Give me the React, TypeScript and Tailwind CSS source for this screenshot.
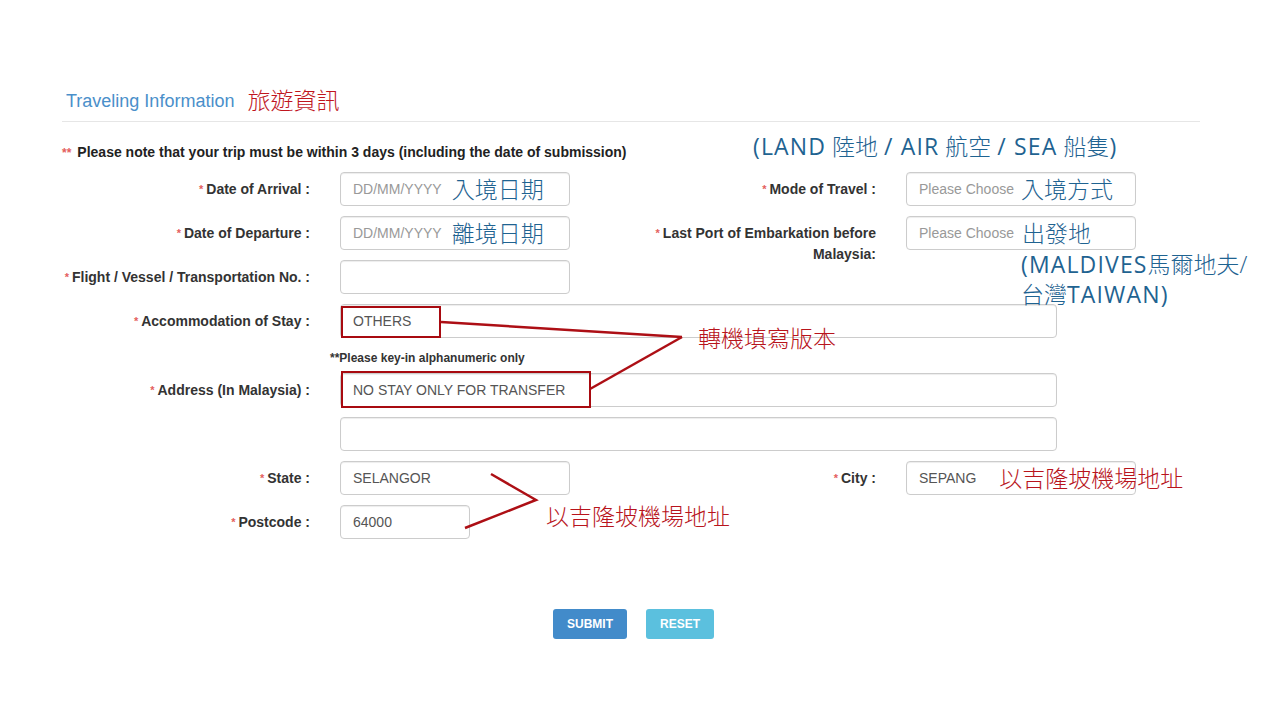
import React from "react";

const cjk = "font-['Open_Sans','Noto_Sans_CJK_TC','Noto_Sans_CJK_SC',sans-serif] font-light";

function Label({ children }: { children: React.ReactNode }) {
  return (
    <span className="text-[14px] font-bold text-[#333]">
      <span className="relative top-[-1px] mr-[3px] text-[11px] text-[#e4605e]">*</span>
      {children}
    </span>
  );
}

function Field({
  className = "w-[230px]",
  children,
}: {
  className?: string;
  children?: React.ReactNode;
}) {
  return (
    <div
      className={`flex h-[34px] items-center whitespace-nowrap rounded-[4px] border border-[#ccc] px-[12px] text-[14px] text-[#555] shadow-[inset_0_1px_1px_rgba(0,0,0,0.075)] ${className}`}
    >
      {children}
    </div>
  );
}

function BlueNote({ children, className = "" }: { children: React.ReactNode; className?: string }) {
  return <span className={`${cjk} text-[23px] leading-[28px] text-[#1f6391] ${className}`}>{children}</span>;
}

// latin bits of the annotations run a bit wider in the screenshot
function W({ children }: { children: React.ReactNode }) {
  return <span className="font-normal tracking-[0.05em]">{children}</span>;
}

export default function App() {
  return (
    <div className="relative min-h-[720px] w-[1280px] bg-white font-['Liberation_Sans',Arial,sans-serif]">
      <div className="pl-[62px] pr-[80px] pt-[86px]">
        {/* heading */}
        <div className="flex items-end">
          <h2 className="ml-[4px] text-[18px] leading-[26px] text-[#4a8fca]">Traveling Information</h2>
          <span className={`${cjk} ml-[13px] text-[23px] leading-[28px] text-[#c0161e]`}>旅遊資訊</span>
        </div>
        <div className="mt-[7px] border-t border-[#e6e6e6]" />

        <p className="mt-[22px] text-[14px] font-bold leading-[16px] text-[#222]">
          <span className="mr-[6px] text-[12px] text-[#e4605e]">**</span>
          Please note that your trip must be within 3 days (including the date of submission)
        </p>

        <div className="mt-[11px]">
          {/* arrival / mode */}
          <div className="mb-[10px] flex h-[34px] items-center">
            <div className="w-[248px] text-right">
              <Label>Date of Arrival :</Label>
            </div>
            <Field className="ml-[30px] w-[230px]">
              <span className="text-[#999]">DD/MM/YYYY</span>
              <BlueNote className="ml-[10px]">入境日期</BlueNote>
            </Field>
            <div className="ml-[30px] w-[276px] text-right">
              <Label>Mode of Travel :</Label>
            </div>
            <Field className="ml-[30px] w-[230px]">
              <span className="text-[#999]">Please Choose</span>
              <BlueNote className="ml-[7px]">入境方式</BlueNote>
            </Field>
          </div>

          {/* departure / last port */}
          <div className="mb-[10px] flex h-[34px] items-center">
            <div className="w-[248px] text-right">
              <Label>Date of Departure :</Label>
            </div>
            <Field className="ml-[30px] w-[230px]">
              <span className="text-[#999]">DD/MM/YYYY</span>
              <BlueNote className="ml-[10px]">離境日期</BlueNote>
            </Field>
            <div className="ml-[30px] mt-[20px] w-[276px] text-right leading-[20px]">
              <Label>Last Port of Embarkation before</Label>
              <br />
              <span className="text-[14px] font-bold text-[#333]">Malaysia:</span>
            </div>
            <div className="relative ml-[30px]">
              <Field className="w-[230px]">
                <span className="text-[#999]">Please Choose</span>
                <BlueNote className="ml-[8px]">出發地</BlueNote>
              </Field>
              <div className="absolute left-[115px] top-[34px] whitespace-nowrap">
                <BlueNote>
                  <W>(MALDIVES</W>馬爾地夫/
                </BlueNote>
                <br />
                <BlueNote>
                  台灣<W>TAIWAN)</W>
                </BlueNote>
              </div>
            </div>
          </div>

          {/* flight */}
          <div className="mb-[10px] flex h-[34px] items-center">
            <div className="w-[248px] text-right">
              <Label>Flight / Vessel / Transportation No. :</Label>
            </div>
            <Field className="ml-[30px] w-[230px]" />
          </div>

          {/* accommodation */}
          <div className="flex h-[34px] items-center">
            <div className="w-[248px] text-right">
              <Label>Accommodation of Stay :</Label>
            </div>
            <Field className="ml-[30px] w-[717px]">OTHERS</Field>
          </div>

          <div className="flex h-[35px] items-center pl-[268px] pt-[4px]">
            <span className="text-[12px] font-bold text-[#333]">**Please key-in alphanumeric only</span>
          </div>

          {/* address */}
          <div className="mb-[10px] flex h-[34px] items-center">
            <div className="w-[248px] text-right">
              <Label>Address (In Malaysia) :</Label>
            </div>
            <Field className="ml-[30px] w-[717px]">NO STAY ONLY FOR TRANSFER</Field>
          </div>
          <div className="mb-[10px] flex h-[34px] items-center">
            <Field className="ml-[278px] w-[717px]" />
          </div>

          {/* state / city */}
          <div className="mb-[10px] flex h-[34px] items-center">
            <div className="w-[248px] text-right">
              <Label>State :</Label>
            </div>
            <Field className="ml-[30px] w-[230px]">SELANGOR</Field>
            <div className="ml-[30px] w-[276px] text-right">
              <Label>City :</Label>
            </div>
            <Field className="ml-[30px] w-[230px]">
              SEPANG
              <span className={`${cjk} ml-[23px] text-[23px] text-[#b8141c]`}>以吉隆坡機場地址</span>
            </Field>
          </div>

          {/* postcode */}
          <div className="flex h-[34px] items-center">
            <div className="w-[248px] text-right">
              <Label>Postcode :</Label>
            </div>
            <Field className="ml-[30px] w-[130px]">64000</Field>
          </div>
        </div>

        {/* buttons */}
        <div className="mt-[70px] flex gap-[19px] pl-[491px]">
          <button className="h-[30px] w-[74px] rounded-[3px] bg-[#428bca] text-[12px] font-bold text-white">
            SUBMIT
          </button>
          <button className="h-[30px] w-[68px] rounded-[3px] bg-[#5bc0de] text-[12px] font-bold text-white">
            RESET
          </button>
        </div>
      </div>

      {/* annotations laid over the form */}
      <span className={`${cjk} absolute left-[753px] top-[131px] whitespace-nowrap text-[23px] leading-[30px] text-[#1f6391]`}>
        <W>(LAND</W> 陸地 <W>/ AIR</W> 航空 <W>/ SEA</W> 船隻<W>)</W>
      </span>
      <div className="pointer-events-none absolute left-[341px] top-[306px] h-[32px] w-[100px] border-[2.5px] border-[#a80a10]" />
      <div className="pointer-events-none absolute left-[341px] top-[371px] h-[37px] w-[250px] border-[2.5px] border-[#a80a10]" />
      <span className={`${cjk} absolute left-[698px] top-[323px] text-[23px] leading-[30px] text-[#b8141c]`}>
        轉機填寫版本
      </span>
      <span className={`${cjk} absolute left-[546px] top-[501px] text-[23px] leading-[30px] text-[#b8141c]`}>
        以吉隆坡機場地址
      </span>
      <svg className="pointer-events-none absolute left-0 top-0" width="1280" height="720">
        <g stroke="#ad0f15" strokeWidth="2.5" fill="none">
          <line x1="441" y1="322" x2="682" y2="337" />
          <line x1="590" y1="389" x2="682" y2="337" />
          <polyline points="491,474 536,500 465,528" />
        </g>
      </svg>
    </div>
  );
}
